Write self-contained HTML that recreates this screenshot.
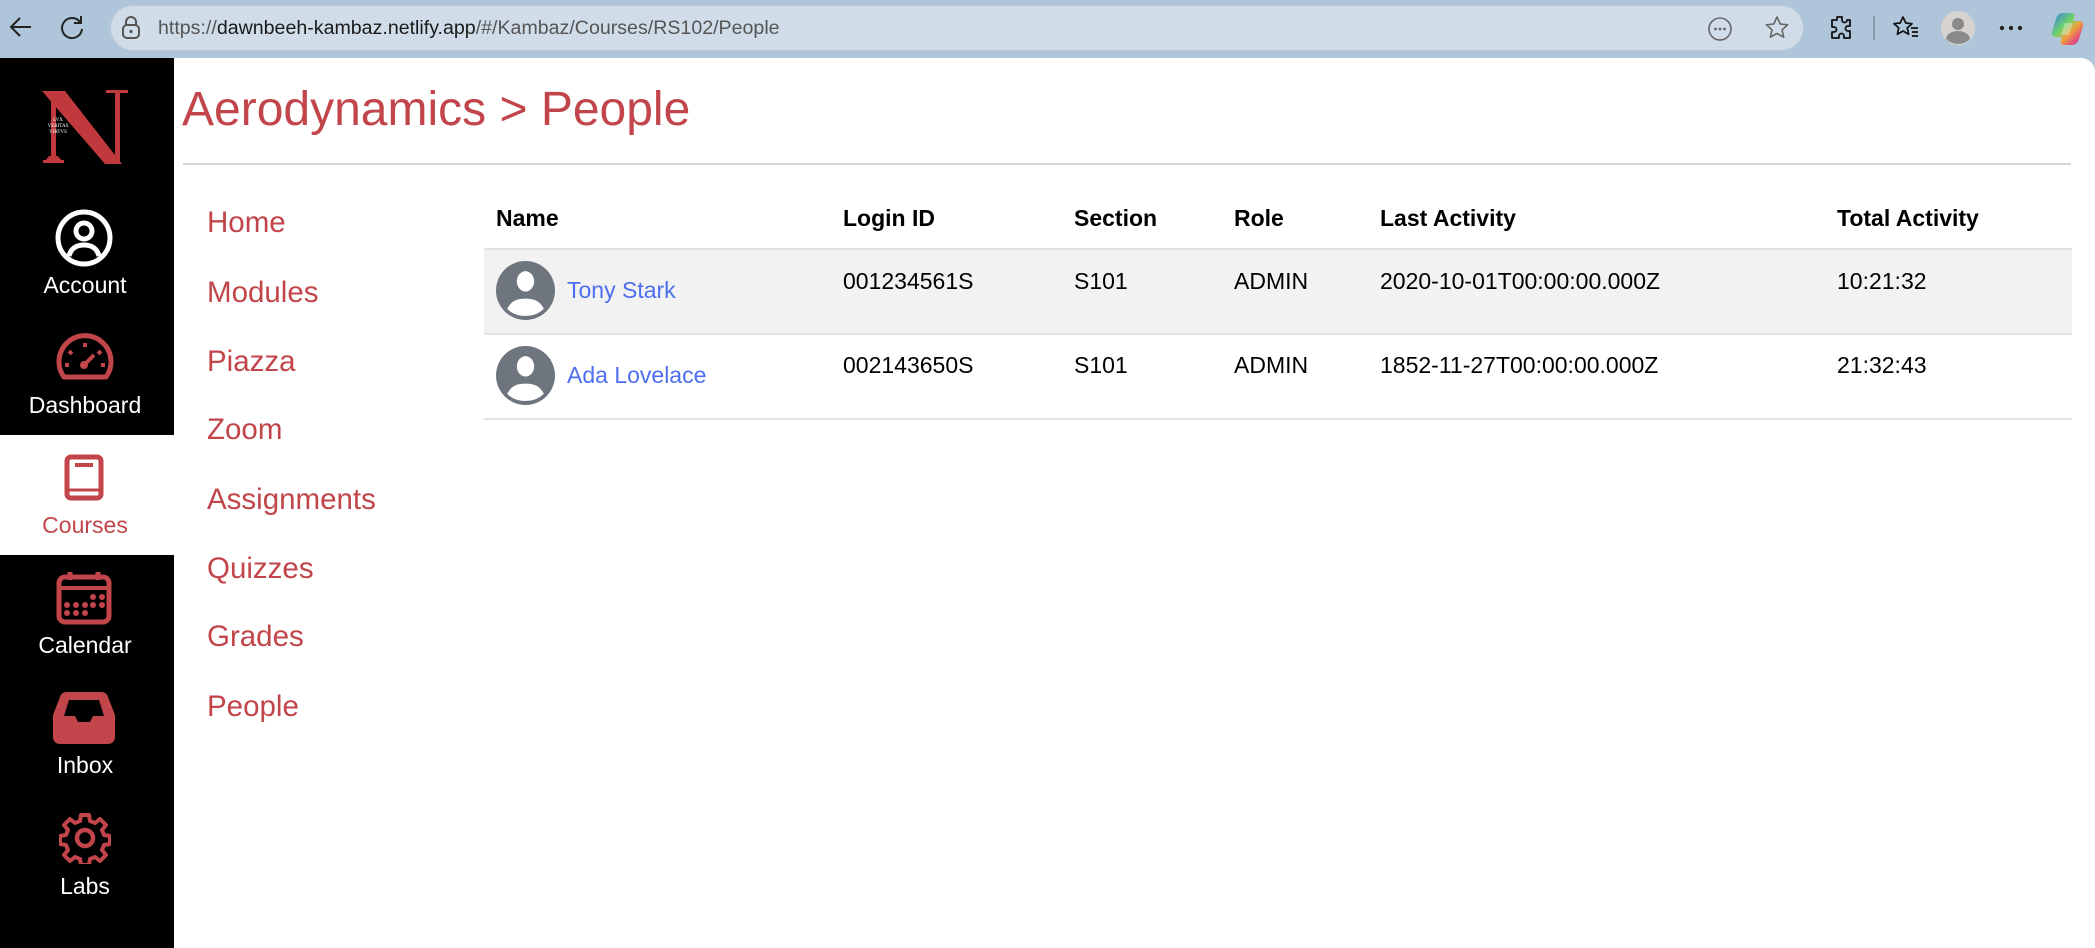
<!DOCTYPE html>
<html><head><meta charset="utf-8">
<style>
*{margin:0;padding:0;box-sizing:border-box}
body{width:2095px;height:948px;overflow:hidden;background:#aec5da;font-family:"Liberation Sans",Arial,sans-serif;position:relative}
.abs{position:absolute}
.page{position:absolute;left:0;top:58px;width:2095px;height:890px;background:#fff;border-top-right-radius:14px}
.side{position:absolute;left:0;top:58px;width:174px;height:890px;background:#000}
.lbl{position:absolute;left:-2px;width:174px;text-align:center;font-size:23px;line-height:24px;color:#fff}
.red{color:#c1454a}
.nav{position:absolute;left:207px;font-size:29.5px;line-height:30px;color:#c1454a}
.th{position:absolute;font-size:23px;font-weight:bold;line-height:24px;color:#000}
.td{position:absolute;font-size:23px;line-height:24px;color:#000}
.nm{position:absolute;font-size:23px;line-height:24px;color:#4d6ef0}
</style></head><body>
<!-- browser chrome -->
<svg class="abs" style="left:8px;top:14px" width="26" height="26" viewBox="0 0 26 26"><path d="M23 13H4M12 4L3 13l9 9" fill="none" stroke="#222" stroke-width="2"/></svg>
<svg class="abs" style="left:58px;top:13px" width="28" height="28" viewBox="0 0 28 28"><path d="M22 9A10 10 0 1 0 24 16" fill="none" stroke="#222" stroke-width="2"/><path d="M23 3v7h-7" fill="none" stroke="#222" stroke-width="2"/></svg>
<div class="abs" style="left:110px;top:5px;width:1694px;height:46px;background:#d0dde9;border-radius:23px;border:1px solid #b8c9d9"></div>
<svg class="abs" style="left:120px;top:15px" width="22" height="26" viewBox="0 0 22 26"><rect x="3" y="10" width="16" height="13" rx="4" fill="none" stroke="#555" stroke-width="2"/><path d="M6 10V7a5 5 0 0 1 10 0v3" fill="none" stroke="#555" stroke-width="2"/><circle cx="11" cy="16.5" r="1.6" fill="#555"/></svg>
<div class="abs" style="left:158px;top:16px;font-size:19.6px;line-height:24px;color:#555;white-space:nowrap">https://<span style="color:#1a1a1a">dawnbeeh-kambaz.netlify.app</span>/#/Kambaz/Courses/RS102/People</div>
<svg class="abs" style="left:1704px;top:13px" width="32" height="32" viewBox="0 0 32 32"><circle cx="16" cy="16" r="11" fill="none" stroke="#666" stroke-width="1.6"/><circle cx="11.5" cy="16" r="1.4" fill="#666"/><circle cx="16" cy="16" r="1.4" fill="#666"/><circle cx="20.5" cy="16" r="1.4" fill="#666"/></svg>
<svg class="abs" style="left:1763px;top:14px" width="28" height="28" viewBox="0 0 28 28"><path d="M14 3l3.3 7 7.4.8-5.6 5 1.6 7.4L14 19.4l-6.6 3.8L9 15.8l-5.6-5 7.4-.8z" fill="none" stroke="#666" stroke-width="1.6" stroke-linejoin="round"/></svg>
<svg class="abs" style="left:1827px;top:13px" width="28" height="30" viewBox="0 0 28 30"><path d="M10 4h5v3a2.5 2.5 0 0 0 5 0V7h3v6h-2a2.5 2.5 0 0 0 0 5h2v7h-6v-2a2.5 2.5 0 0 0-5 0v2H5v-6h2a2.5 2.5 0 0 0 0-5H5V7h5z" fill="none" stroke="#111" stroke-width="1.8" stroke-linejoin="round"/></svg>
<div class="abs" style="left:1873px;top:16px;width:2px;height:24px;background:#8a9aaa"></div>
<svg class="abs" style="left:1891px;top:14px" width="30" height="28" viewBox="0 0 30 28"><path d="M12 3l2.8 6 6.2.7-4.7 4.2 1.3 6.3L12 17l-5.6 3.2 1.3-6.3L3 9.7l6.2-.7z" fill="none" stroke="#111" stroke-width="1.7" stroke-linejoin="round"/><path d="M20 14h7M21 18h6M21 22h6" stroke="#111" stroke-width="1.7"/></svg>
<svg class="abs" style="left:1941px;top:11px" width="34" height="34" viewBox="0 0 34 34"><circle cx="17" cy="17" r="17" fill="#d6d3d0"/><circle cx="17" cy="13" r="6" fill="#8a8a8a"/><path d="M5 28a12 8 0 0 1 24 0 17 17 0 0 1-24 0z" fill="#8a8a8a"/></svg>
<svg class="abs" style="left:1999px;top:24px" width="24" height="8" viewBox="0 0 24 8"><circle cx="3" cy="4" r="2.2" fill="#222"/><circle cx="12" cy="4" r="2.2" fill="#222"/><circle cx="21" cy="4" r="2.2" fill="#222"/></svg>
<svg class="abs" style="left:2051px;top:11px" width="34" height="36" viewBox="0 0 34 36"><defs><linearGradient id="cg" x1="0" y1="0" x2="1" y2="1"><stop offset="0" stop-color="#3a7bf0"/><stop offset=".4" stop-color="#6dd36a"/><stop offset=".6" stop-color="#f2a23a"/><stop offset=".8" stop-color="#e2507a"/><stop offset="1" stop-color="#a15ae8"/></linearGradient></defs><path d="M12 2h8c3 0 4 2 3 5l-1 3h6c3 0 5 2 4 5l-4 13c-1 4-4 6-7 6h-8c-3 0-4-2-3-5l1-3H5c-3 0-5-2-4-5L5 8c1-4 4-6 7-6z" fill="url(#cg)"/><path d="M14 12h8l-4 12h-8z" fill="#fff" opacity=".35"/></svg>

<div class="page"></div>
<div class="side"></div>
<!-- logo -->
<svg class="abs" style="left:38px;top:90px" width="92" height="74" viewBox="0 0 92 74"><g fill="#c0393d"><polygon points="4,1 27,1 84,74 67,74"/><rect x="13" y="3" width="5" height="64"/><polygon points="7,71 24,71 20,66 11,66"/><rect x="5" y="70" width="21" height="3"/><rect x="77" y="3" width="5" height="71"/><rect x="68" y="0" width="22" height="3"/></g></svg>
<div class="abs" style="left:44px;top:118px;width:28px;font-size:5px;line-height:6px;color:#fff;text-align:center;font-family:'Liberation Serif',serif">LVX<br>VERITAS<br>VIRTVS</div>

<!-- sidebar items -->
<svg class="abs" style="left:55px;top:209px" width="58" height="58" viewBox="0 0 58 58"><circle cx="29" cy="29" r="26" fill="none" stroke="#fff" stroke-width="5"/><circle cx="29" cy="22" r="8" fill="none" stroke="#fff" stroke-width="5"/><path d="M14 47c2-8 8-11 15-11s13 3 15 11" fill="none" stroke="#fff" stroke-width="5"/></svg>
<div class="lbl" style="top:273px">Account</div>

<svg class="abs" style="left:56px;top:333px" width="58" height="50" viewBox="0 0 58 50"><path d="M8 44A26 26 0 1 1 50 44z" fill="none" stroke="#c1454a" stroke-width="5" stroke-linejoin="round"/><path d="M29 10v4M13 18l3 3M45 18l-3 3M9 32h4M45 32h4" stroke="#c1454a" stroke-width="4"/><path d="M28 32l10-10" stroke="#c1454a" stroke-width="4"/><circle cx="28" cy="32" r="4" fill="#c1454a"/></svg>
<div class="lbl" style="top:393px">Dashboard</div>

<div class="abs" style="left:0;top:435px;width:174px;height:120px;background:#fff"></div>
<svg class="abs" style="left:64px;top:454px" width="40" height="47" viewBox="0 0 40 47"><rect x="3" y="3" width="34" height="41" rx="4" fill="none" stroke="#c1454a" stroke-width="5"/><path d="M11 11h18" stroke="#c1454a" stroke-width="4"/><path d="M3 36h34" stroke="#c1454a" stroke-width="3"/></svg>
<div class="lbl red" style="top:513px">Courses</div>

<svg class="abs" style="left:56px;top:570px" width="56" height="56" viewBox="0 0 56 56"><rect x="3" y="7" width="50" height="45" rx="6" fill="none" stroke="#c1454a" stroke-width="5"/><path d="M3 18h50" stroke="#c1454a" stroke-width="4"/><path d="M14 2v8M42 2v8" stroke="#c1454a" stroke-width="5"/><g fill="#c1454a"><circle cx="37" cy="27" r="3"/><circle cx="46" cy="27" r="3"/><circle cx="11" cy="35" r="3"/><circle cx="20" cy="35" r="3"/><circle cx="29" cy="35" r="3"/><circle cx="37" cy="35" r="3"/><circle cx="46" cy="35" r="3"/><circle cx="11" cy="43" r="3"/><circle cx="20" cy="43" r="3"/><circle cx="29" cy="43" r="3"/></g></svg>
<div class="lbl" style="top:633px">Calendar</div>

<svg class="abs" style="left:53px;top:692px" width="62" height="52" viewBox="0 0 62 52"><path d="M14 0h34c4 0 6 2 7 5l7 18v22c0 4-3 7-7 7H7c-4 0-7-3-7-7V23L7 5c1-3 3-5 7-5z" fill="#c1454a"/><path d="M16 8h30l5 16H40l-3 6H25l-3-6H11z" fill="#000"/></svg>
<div class="lbl" style="top:753px">Inbox</div>

<svg class="abs" style="left:59px;top:812px" width="52" height="52" viewBox="0 0 52 52"><path d="M22 3h8l1 6 5 2 5-4 6 6-4 5 2 5 6 1v8l-6 1-2 5 4 5-6 6-5-4-5 2-1 6h-8l-1-6-5-2-5 4-6-6 4-5-2-5-6-1v-8l6-1 2-5-4-5 6-6 5 4 5-2z" fill="none" stroke="#c1454a" stroke-width="4" stroke-linejoin="round"/><circle cx="26" cy="26" r="8" fill="none" stroke="#c1454a" stroke-width="4.5"/></svg>
<div class="lbl" style="top:874px">Labs</div>

<!-- title -->
<div class="abs" style="left:182px;top:82px;font-size:48px;line-height:56px;color:#c1454a;white-space:nowrap">Aerodynamics &gt; People</div>
<div class="abs" style="left:183px;top:163px;width:1888px;height:2px;background:#d6d6d6"></div>

<!-- course nav -->
<div class="nav" style="top:208px">Home</div>
<div class="nav" style="top:278px">Modules</div>
<div class="nav" style="top:347px">Piazza</div>
<div class="nav" style="top:415px">Zoom</div>
<div class="nav" style="top:485px">Assignments</div>
<div class="nav" style="top:554px">Quizzes</div>
<div class="nav" style="top:622px">Grades</div>
<div class="nav" style="top:692px">People</div>

<!-- table -->
<div class="th" style="left:496px;top:206px">Name</div>
<div class="th" style="left:843px;top:206px">Login ID</div>
<div class="th" style="left:1074px;top:206px">Section</div>
<div class="th" style="left:1234px;top:206px">Role</div>
<div class="th" style="left:1380px;top:206px">Last Activity</div>
<div class="th" style="left:1837px;top:206px">Total Activity</div>
<div class="abs" style="left:484px;top:248px;width:1588px;height:2px;background:#e2e2e2"></div>
<div class="abs" style="left:484px;top:250px;width:1588px;height:83px;background:#f2f2f2"></div>
<div class="abs" style="left:484px;top:333px;width:1588px;height:2px;background:#e2e2e2"></div>
<div class="abs" style="left:484px;top:418px;width:1588px;height:2px;background:#e2e2e2"></div>

<svg class="abs" style="left:496px;top:261px" width="59" height="59" viewBox="0 0 58 58"><circle cx="29" cy="29" r="29" fill="#6e757e"/><ellipse cx="29" cy="20" rx="8.5" ry="10" fill="#fff"/><path d="M11 47c4-8 10-10 18-10s14 2 18 10c-5 5-11 7-18 7s-13-2-18-7z" fill="#fff"/></svg>
<div class="nm" style="left:567px;top:278px">Tony Stark</div>
<div class="td" style="left:843px;top:269px">001234561S</div>
<div class="td" style="left:1074px;top:269px">S101</div>
<div class="td" style="left:1234px;top:269px">ADMIN</div>
<div class="td" style="left:1380px;top:269px">2020-10-01T00:00:00.000Z</div>
<div class="td" style="left:1837px;top:269px">10:21:32</div>

<svg class="abs" style="left:496px;top:346px" width="59" height="59" viewBox="0 0 58 58"><circle cx="29" cy="29" r="29" fill="#6e757e"/><ellipse cx="29" cy="20" rx="8.5" ry="10" fill="#fff"/><path d="M11 47c4-8 10-10 18-10s14 2 18 10c-5 5-11 7-18 7s-13-2-18-7z" fill="#fff"/></svg>
<div class="nm" style="left:567px;top:363px">Ada Lovelace</div>
<div class="td" style="left:843px;top:353px">002143650S</div>
<div class="td" style="left:1074px;top:353px">S101</div>
<div class="td" style="left:1234px;top:353px">ADMIN</div>
<div class="td" style="left:1380px;top:353px">1852-11-27T00:00:00.000Z</div>
<div class="td" style="left:1837px;top:353px">21:32:43</div>
</body></html>
